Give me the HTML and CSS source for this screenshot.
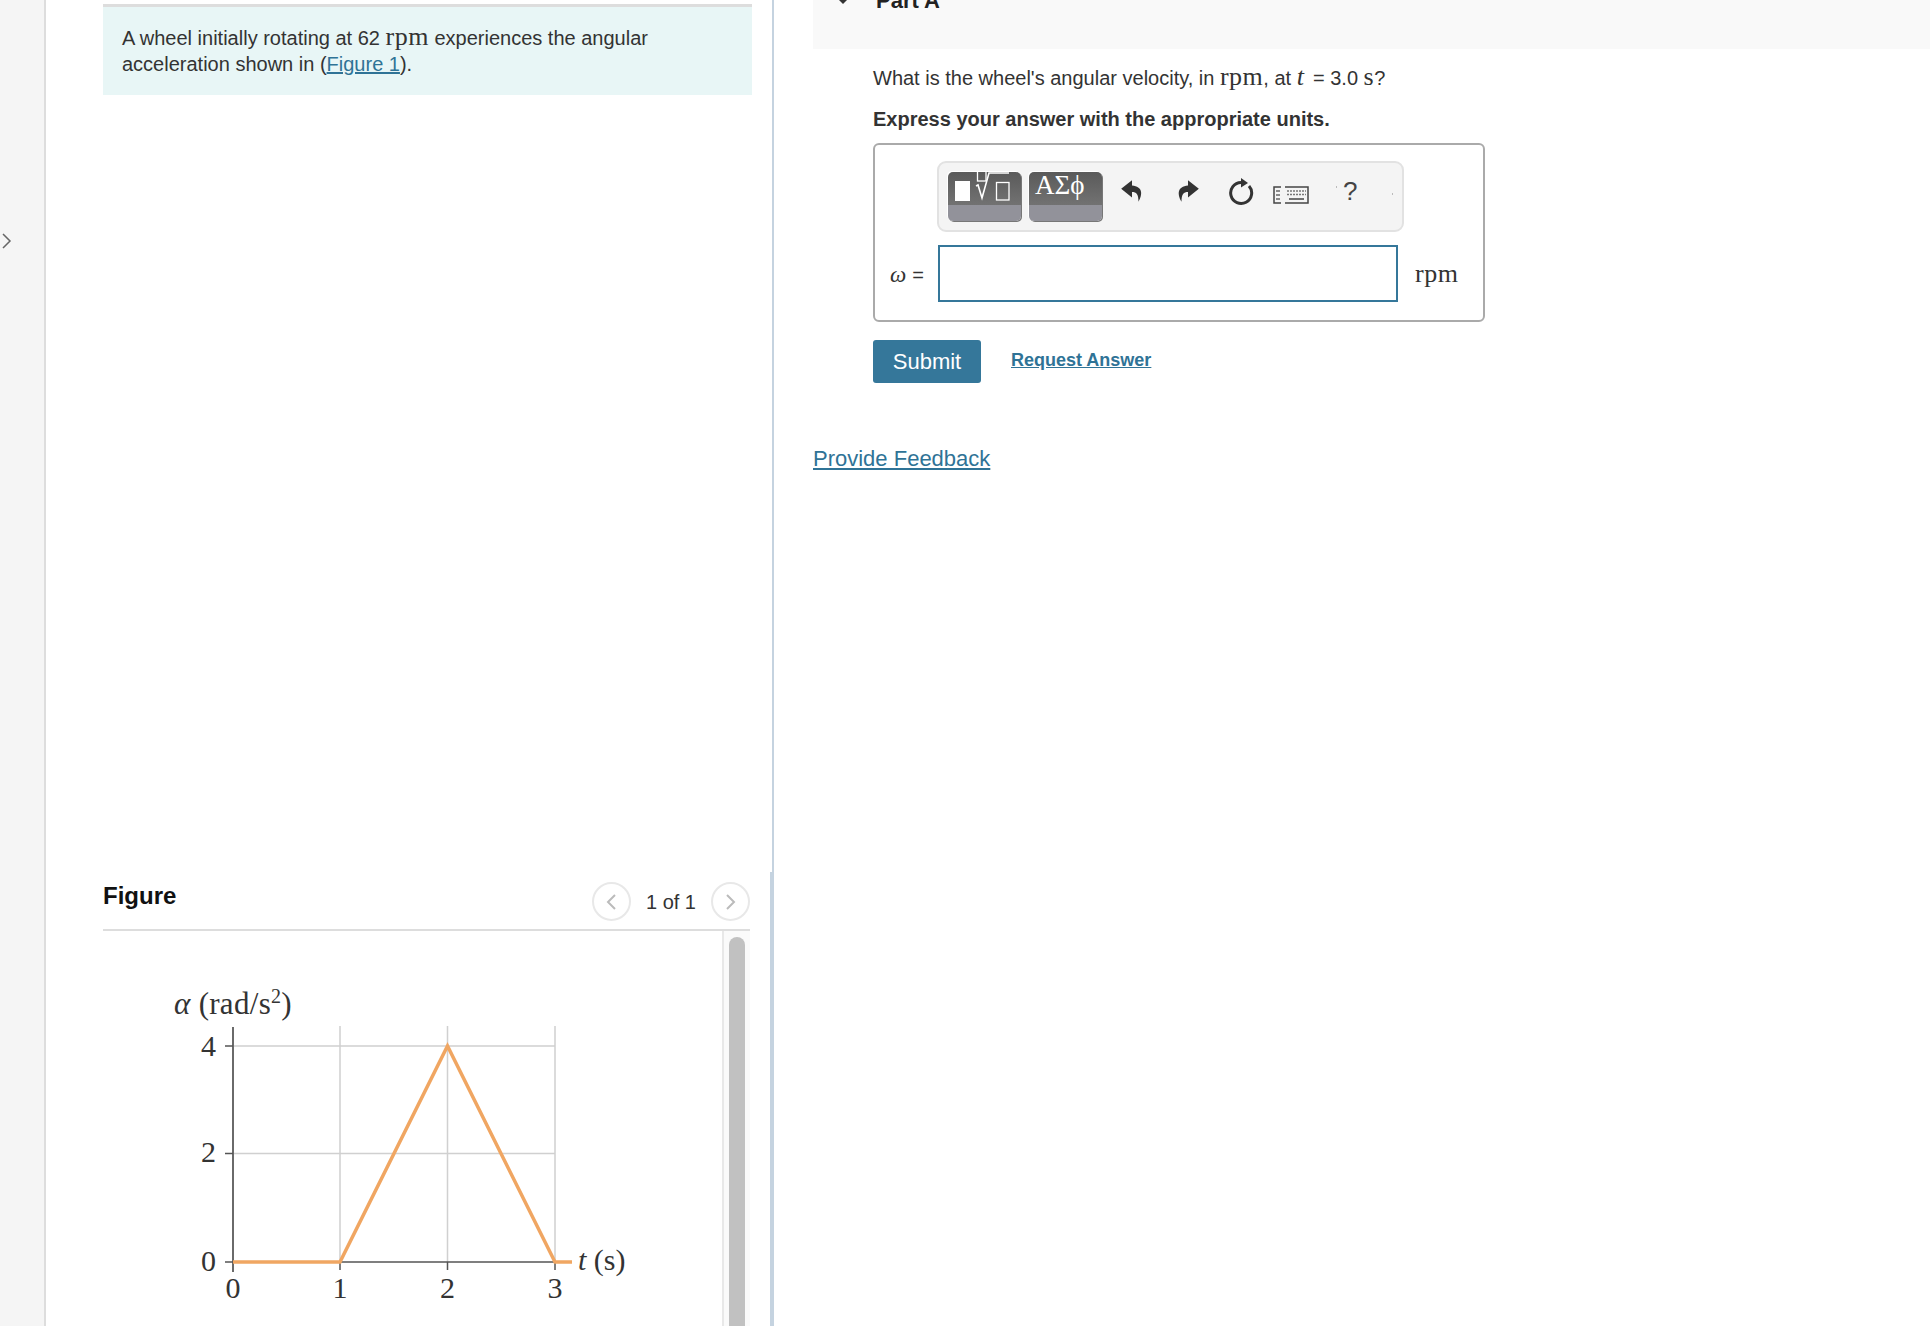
FILE: index.html
```html
<!DOCTYPE html>
<html lang="en">

<head>
    <meta charset="UTF-8">
    <meta name="viewport" content="width=device-width, initial-scale=1.0">
    <title>Part A</title>
    <link rel="stylesheet" href="styles.css">
</head>

<body>
    <div class="page">
        <div class="rail">
            <svg class="rail-arrow" width="10" height="16" viewBox="0 0 10 16">
                <path d="M1 1l7 7-7 7" fill="none" stroke="#666" stroke-width="1.5" />
            </svg>
        </div>

        <div class="left">
            <div class="statement">
                A wheel initially rotating at 62 <span class="math">rpm</span> experiences the angular
                acceleration shown in (<a href="#">Figure 1</a>).
            </div>

            <div class="figure">
                <div class="figure-head">
                    <h2>Figure</h2>
                    <div class="pager">
                        <span class="pager-btn">
                            <svg width="12" height="18" viewBox="0 0 12 18">
                                <path d="M10 2L3 9l7 7" fill="none" stroke="#bbb" stroke-width="2" />
                            </svg>
                        </span>
                        <span class="pager-text">1 of 1</span>
                        <span class="pager-btn">
                            <svg width="12" height="18" viewBox="0 0 12 18">
                                <path d="M2 2l7 7-7 7" fill="none" stroke="#bbb" stroke-width="2" />
                            </svg>
                        </span>
                    </div>
                </div>
                <div class="figure-body">
                    <svg class="plot" width="618" height="395" viewBox="103 931 618 395">
                        <!-- grid -->
                        <g stroke="#d0d0d0" stroke-width="1.5">
                            <path d="M340 1026V1262M447.5 1026V1262M555 1026V1262" fill="none" />
                            <path d="M233 1046H555M233 1153.5H555" fill="none" />
                        </g>
                        <!-- axes -->
                        <path d="M233 1027V1272" stroke="#6a6a6a" stroke-width="2" fill="none" />
                        <path d="M225 1262H572" stroke="#555" stroke-width="1.5" fill="none" />
                        <path d="M225 1046h8M225 1153.5h8M340 1262v8M447.5 1262v8M555 1262v8" stroke="#555"
                            stroke-width="1.5" fill="none" />
                        <!-- curve -->
                        <polyline points="233,1262 340,1262 447.5,1046 555,1262 572,1262" fill="none" stroke="#f0a662"
                            stroke-width="3.5" />
                        <!-- labels -->
                        <g class="plot-text">
                            <text class="axis-title" x="174" y="1014"><tspan class="it">α</tspan> (rad/s<tspan class="sup" dy="-11">2</tspan><tspan dy="11">)</tspan></text>
                            <text x="578" y="1270"><tspan class="it">t</tspan> (s)</text>
                            <g class="num-y">
                                <text x="216" y="1056">4</text>
                                <text x="216" y="1162">2</text>
                                <text x="216" y="1271">0</text>
                            </g>
                            <g class="num-x">
                                <text x="233" y="1298">0</text>
                                <text x="340" y="1298">1</text>
                                <text x="447.5" y="1298">2</text>
                                <text x="555" y="1298">3</text>
                            </g>
                        </g>
                    </svg>
                    <div class="scrollbar">
                        <div class="thumb"></div>
                    </div>
                </div>
            </div>
        </div>

        <div class="right">
            <div class="part-bar">
                <span class="caret"></span>
                <h2>Part A</h2>
            </div>

            <div class="part-body">
                <p class="question">
                    What is the wheel's angular velocity, in <span class="math">rpm</span>, at
                    <span class="math it var">t</span> = 3.0 <span class="math">s</span>?
                </p>
                <p class="instruction">Express your answer with the appropriate units.</p>

                <div class="answer-box">
                    <div class="toolbar">
                        <div class="tool-btn tool-btn-first">
                            <svg width="73" height="49" viewBox="0 0 73 49">
                                <rect x="7" y="9" width="15" height="20" fill="#fff" />
                                <rect x="29.500" y="-1" width="8.500" height="10" fill="none" stroke="#fff" stroke-width="1.300" />
                                <path d="M28 14l2-1 4 13 7-25h20" fill="none" stroke="#fff" stroke-width="1.600" />
                                <rect x="48.500" y="10.500" width="12.500" height="17.500" fill="none" stroke="#fff" stroke-width="1.300" />
                            </svg>
                        </div>
                        <div class="tool-btn tool-btn-greek">ΑΣϕ</div>
                        <svg class="tool-icon tool-undo" width="24" height="26" viewBox="0 0 22 24">
                            <path d="M11 2L1 10l10 8v-5c4 0 6 2 6 9 4-7 4-14-6-15z" fill="#333" />
                        </svg>
                        <svg class="tool-icon tool-redo" width="24" height="26" viewBox="0 0 22 24">
                            <path d="M11 2l10 8-10 8v-5c-4 0-6 2-6 9-4-7-4-14 6-15z" fill="#333" />
                        </svg>
                        <svg class="tool-icon tool-reset" width="26" height="30" viewBox="0 0 26 30">
                            <path d="M13 6.500A10.500 10.500 0 1 0 21 10" fill="none" stroke="#333" stroke-width="3" />
                            <path d="M13 2l7 5-7 4.500z" fill="#333" />
                        </svg>
                        <svg class="tool-icon tool-keys" width="36" height="18" viewBox="0 0 36 18">
                            <path d="M8 1H1v16h7" fill="none" stroke="#444" stroke-width="1.500" />
                            <path d="M12 1h23v16H12" fill="none" stroke="#444" stroke-width="1.500" />
                            <path d="M3 5h4M3 9h4M3 13h4" stroke="#666" stroke-width="1.500" />
                            <path d="M14 5h19M14 8.500h19" stroke="#777" stroke-width="1.500" stroke-dasharray="2 1" />
                            <path d="M16 13h15" stroke="#444" stroke-width="1.500" />
                        </svg>
                        <span class="tool-dot"></span>
                        <span class="tool-help">?</span>
                        <span class="tool-dot tool-dot-end"></span>
                    </div>

                    <div class="answer-row">
                        <label class="answer-label" for="answer"><span class="math it">ω</span> =</label>
                        <input type="text" id="answer" name="answer">
                        <span class="math answer-unit">rpm</span>
                    </div>
                </div>

                <div class="actions">
                    <button type="button">Submit</button>
                    <a href="#" class="request">Request Answer</a>
                </div>
            </div>

            <a href="#" class="feedback">Provide Feedback</a>
        </div>
    </div>
</body>

</html>
```

FILE: styles.css
```css
body {
    font-family: "Liberation Sans", Arial, sans-serif;
    font-size: 20px;
    line-height: 26px;
    color: #333;
    background-color: #fff;
    margin: 0;
}

a {
    color: #2f7396;
}

h2 {
    margin: 0;
}

.page {
    display: flex;
    height: 1326px;
    overflow: hidden;
}

.math {
    font-family: "Liberation Serif", "Times New Roman", serif;
    font-size: 26px;
    line-height: 20px;
    letter-spacing: 0.5px;
}

.it {
    font-style: italic;
}

.var {
    margin: 0 3px 0 0;
}

/* left rail */
.rail {
    width: 44px;
    flex: none;
    background-color: #f5f5f5;
    border-right: 2px solid #ddd;
    padding-top: 233px;
}

.rail-arrow {
    display: block;
    margin-left: 2px;
}

/* problem + figure */
.left {
    width: 728px;
    flex: none;
    display: flex;
    flex-direction: column;
    padding-left: 57px;
    box-sizing: border-box;
    border-right: 2px solid #c5d3e0;
}

.statement {
    margin-top: 4px;
    margin-right: 20px;
    padding: 18px 18px 18px 19px;
    background-color: #e8f6f6;
    border-top: 3px solid #ddd;
}

.figure {
    margin-top: auto;
    height: 454px;
    padding-right: 20px;
    border-right: 2px solid #c5d3e0;
    box-sizing: border-box;
}

.figure-head {
    display: flex;
    justify-content: space-between;
    height: 57px;
    border-bottom: 2px solid #ddd;
}

.figure-head h2 {
    font-size: 24px;
    margin-top: 11px;
    color: #111;
}

.pager {
    display: flex;
    align-items: center;
    height: 39px;
    margin-top: 10px;
    gap: 15px;
}

.pager-btn {
    width: 39px;
    height: 39px;
    box-sizing: border-box;
    border: 2px solid #e8e8e8;
    border-radius: 50%;
    display: flex;
    align-items: center;
    justify-content: center;
}

.figure-body {
    display: flex;
    justify-content: space-between;
}

.plot {
    display: block;
}

.plot-text text {
    font-family: "Liberation Serif", "Times New Roman", serif;
    font-size: 30px;
    fill: #333;
}

.plot-text .axis-title {
    font-size: 31px;
    letter-spacing: 0.3px;
}

.plot-text .sup {
    font-size: 20px;
}

.num-y text {
    font-size: 30px;
    text-anchor: end;
}

.num-x text {
    font-size: 30px;
    text-anchor: middle;
}

.scrollbar {
    width: 28px;
    height: 395px;
    box-sizing: border-box;
    background-color: #fafafa;
    border-left: 2px solid #e8e8e8;
    padding: 6px 5px 0 5px;
}

.thumb {
    height: 400px;
    background-color: #c1c1c1;
    border-radius: 8px;
}

/* part A */
.right {
    flex: 1;
    padding-left: 39px;
}

.part-bar {
    display: flex;
    align-items: flex-start;
    margin-top: -30px;
    height: 79px;
    padding: 18px 0 0 24px;
    box-sizing: border-box;
    background-color: #f9f9f9;
}

.part-bar h2 {
    font-size: 22px;
    line-height: 26px;
    color: #222;
}

.caret {
    width: 0;
    height: 0;
    margin: 10px 27px 0 0;
    border-left: 6px solid transparent;
    border-right: 6px solid transparent;
    border-top: 6px solid #333;
}

.part-body {
    padding-left: 60px;
}

.question {
    margin: 16px 0 15px 0;
}

.instruction {
    margin: 0 0 11px 0;
    font-weight: bold;
}

.answer-box {
    width: 612px;
    height: 179px;
    box-sizing: border-box;
    border: 2px solid #aaa;
    border-radius: 6px;
    padding-top: 16px;
}

.toolbar {
    width: 467px;
    height: 71px;
    margin-left: 62px;
    box-sizing: border-box;
    background-color: #f4f4f4;
    border: 2px solid #e2e2e2;
    border-radius: 9px;
    display: flex;
    align-items: flex-start;
    padding: 9px 0 0 9px;
}

.tool-btn {
    flex: none;
    width: 73px;
    height: 49px;
    box-sizing: border-box;
    border-radius: 5px;
    background: linear-gradient(#5a5a5a, #727272 67%, #92929a 67%);
    box-shadow: -1px -1px 0 #fff, 1px 1px 0 #777;
    color: #fff;
}

.tool-btn-first {
    overflow: hidden;
}

.tool-btn svg {
    display: block;
}

.tool-btn-greek {
    margin-left: 8px;
    font-family: "Liberation Serif", "Times New Roman", serif;
    font-size: 27px;
    line-height: 26px;
    padding: 0 0 0 6px;
}

.tool-icon {
    flex: none;
}

.tool-undo {
    margin: 6px 0 0 18px;
}

.tool-redo {
    margin: 6px 0 0 32px;
}

.tool-reset {
    margin: 4px 0 0 28px;
}

.tool-keys {
    margin: 14px 0 0 19px;
}

.tool-dot {
    flex: none;
    width: 1px;
    height: 2px;
    margin: 14px 0 0 27px;
    background-color: #bbb;
}

.tool-dot-end {
    margin: 21px 0 0 35px;
}

.tool-help {
    margin: 4px 0 0 6px;
    font-size: 26px;
    line-height: 30px;
    color: #444;
}

.answer-row {
    display: flex;
    align-items: center;
    margin-top: 13px;
}

.answer-label {
    width: 63px;
    box-sizing: border-box;
    padding: 2px 0 0 15px;
    font-size: 20px;
}

.answer-label .math {
    font-size: 23px;
}

input[type="text"] {
    width: 460px;
    height: 57px;
    box-sizing: border-box;
    border: 2px solid #35779a;
    border-radius: 0;
    padding: 0 10px;
    background: #fff;
}

.answer-unit {
    margin-left: 17px;
}

.actions {
    display: flex;
    align-items: flex-start;
    margin-top: 18px;
}

button {
    width: 108px;
    height: 43px;
    background-color: #35779a;
    color: #fff;
    border: none;
    border-radius: 3px;
    font-family: inherit;
    font-size: 22px;
    cursor: pointer;
}

.request {
    margin: 8px 0 0 30px;
    font-size: 18px;
    font-weight: bold;
    line-height: 24px;
}

.feedback {
    display: inline-block;
    margin-top: 63px;
    font-size: 22px;
}
```
